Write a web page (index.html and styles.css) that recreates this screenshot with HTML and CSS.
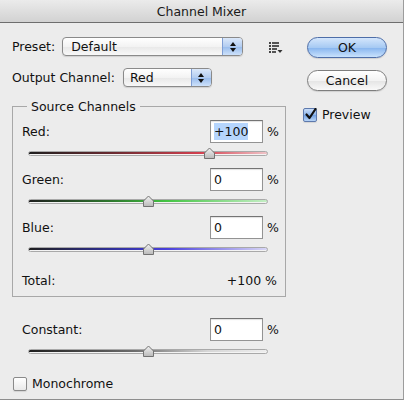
FILE: index.html
```html
<!DOCTYPE html>
<html>
<head>
<meta charset="utf-8">
<title>Channel Mixer</title>
<link rel="stylesheet" href="styles.css">
</head>
<body>
<div class="window">
  <div class="titlebar">Channel Mixer</div>
  <div class="content">
    <div class="main">
      <div class="row">
        <span class="label">Preset:</span>
        <div class="popup preset-popup">
          <span class="popup-text pad8">Default</span>
          <span class="popup-arrows"><svg width="8" height="12" viewBox="0 0 8 12"><path d="M4 1 L7 5 H1 Z" fill="#111"/><path d="M4 11 L7 7 H1 Z" fill="#111"/></svg></span>
        </div>
        <svg class="menu-icon" width="14" height="11" viewBox="0 0 14 11">
          <rect x="0" y="0" width="2" height="2" fill="#444"/><rect x="3" y="0" width="7" height="2" fill="#555"/>
          <rect x="0" y="3" width="2" height="2" fill="#444"/><rect x="3" y="3" width="7" height="2" fill="#555"/>
          <rect x="0" y="6" width="2" height="2" fill="#444"/><rect x="3" y="6" width="5" height="2" fill="#555"/>
          <rect x="0" y="9" width="2" height="2" fill="#444"/><rect x="3" y="9" width="4" height="2" fill="#555"/>
          <path d="M8.5 8 H13.5 L11 11 Z" fill="#333"/>
        </svg>
      </div>
      <div class="row output-row">
        <span class="label">Output Channel:</span>
        <div class="popup output-popup">
          <span class="popup-text pad6">Red</span>
          <span class="popup-arrows"><svg width="8" height="12" viewBox="0 0 8 12"><path d="M4 1 L7 5 H1 Z" fill="#111"/><path d="M4 11 L7 7 H1 Z" fill="#111"/></svg></span>
        </div>
      </div>

      <fieldset class="group">
        <legend>Source Channels</legend>
        <div class="channel">
          <div class="channel-head"><span class="label">Red:</span><span class="field"><span class="sel">+100</span></span><span class="pct">%</span></div>
          <div class="slider">
            <div class="track red"></div>
            <svg class="thumb" style="left:calc(75.4% - 6px)" width="13" height="12" viewBox="0 0 13 12"><defs><linearGradient id="tg1" x1="0" y1="0" x2="0" y2="1"><stop offset="0" stop-color="#f4f4f4"/><stop offset="1" stop-color="#b8b8b8"/></linearGradient></defs><path d="M1.5 11.5 V6 L6.5 1 L11.5 6 V11.5 Z" fill="url(#tg1)" stroke="#727272"/></svg>
          </div>
        </div>
        <div class="channel">
          <div class="channel-head"><span class="label">Green:</span><span class="field">0</span><span class="pct">%</span></div>
          <div class="slider">
            <div class="track green"></div>
            <svg class="thumb" style="left:calc(50% - 6px)" width="13" height="12" viewBox="0 0 13 12"><path d="M1.5 11.5 V6 L6.5 1 L11.5 6 V11.5 Z" fill="url(#tg1)" stroke="#727272"/></svg>
          </div>
        </div>
        <div class="channel">
          <div class="channel-head"><span class="label">Blue:</span><span class="field">0</span><span class="pct">%</span></div>
          <div class="slider">
            <div class="track blue"></div>
            <svg class="thumb" style="left:calc(50% - 6px)" width="13" height="12" viewBox="0 0 13 12"><path d="M1.5 11.5 V6 L6.5 1 L11.5 6 V11.5 Z" fill="url(#tg1)" stroke="#727272"/></svg>
          </div>
        </div>
        <div class="total"><span>Total:</span><span>+100 %</span></div>
      </fieldset>

      <div class="channel constant">
        <div class="channel-head"><span class="label">Constant:</span><span class="field">0</span><span class="pct">%</span></div>
        <div class="slider">
          <div class="track gray"></div>
          <svg class="thumb" style="left:calc(50% - 6px)" width="13" height="12" viewBox="0 0 13 12"><path d="M1.5 11.5 V6 L6.5 1 L11.5 6 V11.5 Z" fill="url(#tg1)" stroke="#727272"/></svg>
        </div>
      </div>

      <div class="check mono"><span class="box"></span>Monochrome</div>
    </div>

    <div class="side">
      <div class="btn ok">OK</div>
      <div class="btn cancel">Cancel</div>
      <div class="check preview">
        <span class="box checked"><svg width="13" height="13" viewBox="0 0 13 13"><path d="M2.5 6.5 L5.5 10 L11.5 1" fill="none" stroke="#111" stroke-width="2.2" stroke-linecap="round" stroke-linejoin="round"/></svg></span>Preview
      </div>
    </div>
  </div>
</div>
</body>
</html>
```

FILE: styles.css
```css
* { box-sizing: border-box; }
html, body { margin: 0; padding: 0; }
body {
  background: #ececec;
  font-family: "DejaVu Sans", sans-serif;
  font-size: 12.5px;
  color: #111;
}
.window {
  width: 404px;
  height: 400px;
  background: #ececec;
  border-right: 1px solid #9c9c9c;
  border-bottom: 1px solid #8e8e8e;
  overflow: hidden;
}
.titlebar {
  height: 23px;
  border-bottom: 1px solid #6e6e6e;
  background: linear-gradient(#ebebeb, #d2d2d2);
  text-align: center;
  line-height: 23px;
  color: #1a1a1a;
}
.content {
  display: flex;
  padding: 14px 0 0 12px;
}
.main { width: 274px; flex: none; }
.row {
  display: flex;
  align-items: center;
  height: 19px;
}
.output-row { margin-top: 12px; }
.label { line-height: 15px; }

.popup {
  display: flex;
  height: 19px;
  border: 1px solid #8a8a8a;
  border-radius: 4px;
  background: linear-gradient(#ffffff, #f3f3f3 50%, #e8e8e8 51%, #f8f8f8);
  box-shadow: 0 1px 1px rgba(0,0,0,0.12);
  overflow: hidden;
}
.preset-popup { width: 181px; margin-left: 7px; }
.output-popup { width: 89px; margin-left: 8px; }
.popup-text { flex: 1; line-height: 17px; }
.pad8 { padding-left: 8px; }
.pad6 { padding-left: 6px; }
.popup-arrows {
  width: 20px;
  display: flex;
  align-items: center;
  justify-content: center;
  border-left: 1px solid #7f9ed4;
  background: linear-gradient(#dbe8fa, #b3cdf1 50%, #97bbec 51%, #cde1fa);
}
.menu-icon { margin-left: 26px; margin-top: 2px; }

.group {
  margin: 12px 0 0 0;
  padding: 6px 8px 8px 9px;
  border: 1px solid #a8a8a8;
  min-width: 0;
  width: 100%;
}
.group legend {
  padding: 0 4px;
  margin-left: 5px;
  line-height: 15px;
}
.channel-head {
  display: flex;
  align-items: center;
  height: 23px;
}
.field {
  margin-left: auto;
  width: 53px;
  height: 23px;
  background: #fff;
  border: 1px solid #939393;
  border-top-color: #747474;
  box-shadow: inset 0 1px 1px rgba(0,0,0,0.12);
  padding-left: 3px;
  line-height: 21px;
}
.sel { background: #b5d5fd; padding: 1px 0; }
.pct { width: 14px; padding-left: 4px; line-height: 15px; }

.slider {
  position: relative;
  height: 20px;
  width: 240px;
  margin: 0 0 5px 6px;
}
.track {
  position: absolute;
  left: 0;
  right: 0;
  top: 8px;
  height: 5px;
  border: 1px solid #a9a9a9;
  border-radius: 3px;
  background-color: #f3f3f3;
  background-repeat: no-repeat;
  background-size: 100% 2px;
  background-position: 0 0;
}
.track.red { background-image: linear-gradient(to right, #1e1e1e, #6a2a30 35%, #d3404f 72%, #f0c4c8 100%); }
.track.green { background-image: linear-gradient(to right, #1e1e1e, #2e7a2e 35%, #44c444 58%, #c4eec4 100%); }
.track.blue { background-image: linear-gradient(to right, #1e1e1e, #30309a 35%, #4a40dc 58%, #d8d6f6 100%); }
.track.gray { background-image: linear-gradient(to right, #1e1e1e, #6e6e6e 45%, #d6d6d6 75%, #eeeeee 100%); }
.thumb { position: absolute; top: 4px; }

.total {
  display: flex;
  justify-content: space-between;
  line-height: 15px;
  margin-top: 14px;
}

.constant { padding: 0 9px 0 10px; margin-top: 21px; }
.constant .slider { margin-bottom: 0; }

.check {
  display: flex;
  align-items: center;
  line-height: 15px;
}
.box {
  width: 14px;
  height: 14px;
  border: 1px solid #8a8a8a;
  border-radius: 2px;
  background: linear-gradient(#ffffff, #e9e9e9);
  margin-right: 5px;
  box-shadow: 0 1px 1px rgba(0,0,0,0.1);
  flex: none;
}
.box.checked {
  border-color: #5d79ad;
  background: linear-gradient(#c9ddf8, #8db5ea 50%, #6fa0e2 51%, #b8d4f6);
}
.box svg { display: block; margin: -1px 0 0 0; }
.mono { margin-top: 15px; margin-left: 1px; }

.side { margin-left: 17px; width: 90px; flex: none; }
.btn {
  width: 80px;
  height: 21px;
  margin-left: 4px;
  border-radius: 11px;
  border: 1px solid #7e7e7e;
  line-height: 19px;
  text-align: center;
  color: #111;
  background: linear-gradient(#ffffff, #f3f3f3 50%, #e4e4e4 51%, #f9f9f9);
  box-shadow: 0 1px 1px rgba(0,0,0,0.12);
}
.btn.ok {
  border-color: #4e6ea8;
  background: linear-gradient(#d4e6fc, #a7caf3 50%, #86b4ee 51%, #c9e2fc);
}
.btn.cancel { margin-top: 12px; }
.preview { margin-top: 16px; }
```
